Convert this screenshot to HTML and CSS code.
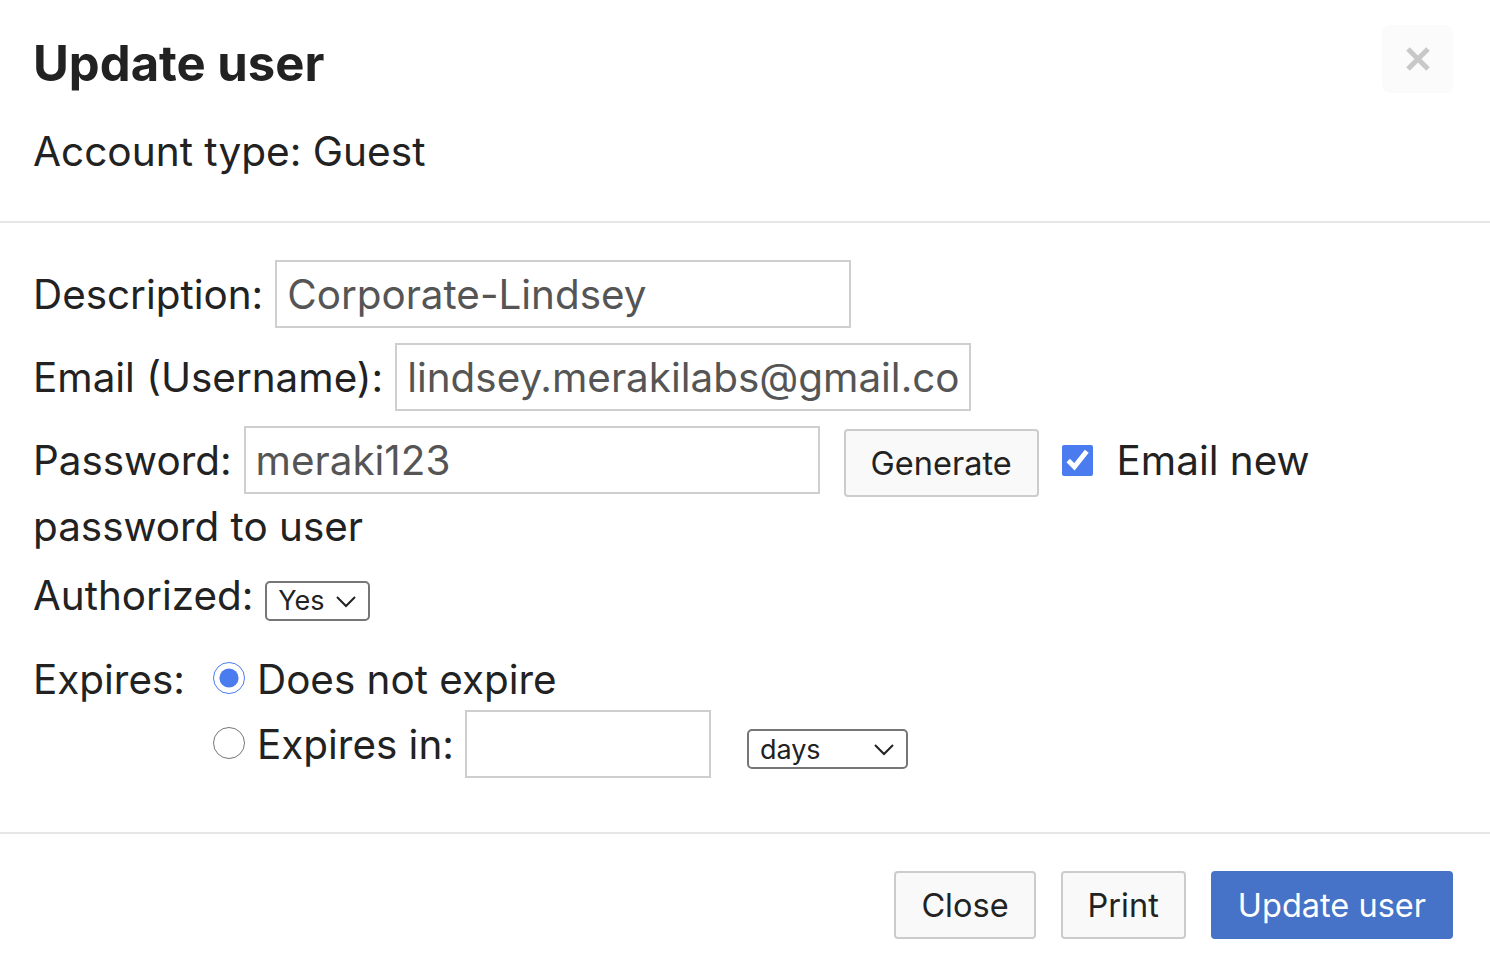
FILE: index.html
```html
<!DOCTYPE html>
<html lang="en">
<head>
    <meta charset="UTF-8">
    <title>Update user</title>
    <link rel="stylesheet" href="styles.css">
</head>
<body>
    <div class="modal">
        <div class="modal-header">
            <div class="header-top">
                <h1 class="title">Update user</h1>
                <button class="close-x" type="button">
                    <svg width="26" height="26" viewBox="0 0 26 26">
                        <path d="M3 3 L23 23 M23 3 L3 23" stroke="#c8c8c8" stroke-width="5" fill="none"/>
                    </svg>
                </button>
            </div>
            <p class="acct">Account type: Guest</p>
        </div>

        <div class="modal-body">
            <div class="row"><label class="lbl">Description:</label><input class="text-input" type="text" value="Corporate-Lindsey"></div>
            <div class="row"><label class="lbl">Email (Username):</label><input class="text-input" type="text" value="lindsey.merakilabs@gmail.com"></div>
            <div class="row pw-row"><label class="lbl">Password:</label><input class="text-input" type="text" value="meraki123"><button class="btn gen-btn" type="button">Generate</button><label class="check"><input type="checkbox" checked>Email new password to user</label></div>
            <div class="row auth-row"><label class="lbl">Authorized:</label><span class="select-wrap"><select class="sel sel-yes"><option>Yes</option><option>No</option></select><svg class="chev" width="20" height="12" viewBox="0 0 20 12"><path d="M1 1 L10 10 L19 1" stroke="#222" stroke-width="2" fill="none"/></svg></span></div>

            <div class="expires">
                <div class="exp-label">Expires:</div>
                <div class="exp-options">
                    <div class="opt"><input class="radio" type="radio" name="exp" checked>Does not expire</div>
                    <div class="opt"><input class="radio" type="radio" name="exp">Expires in:<input class="text-input days-input" type="text"><span class="select-wrap"><select class="sel sel-days"><option>days</option><option>weeks</option></select><svg class="chev" width="20" height="12" viewBox="0 0 20 12"><path d="M1 1 L10 10 L19 1" stroke="#222" stroke-width="2" fill="none"/></svg></span></div>
                </div>
            </div>
        </div>

        <div class="modal-footer">
            <button class="btn" type="button">Close</button>
            <button class="btn" type="button">Print</button>
            <button class="btn btn-primary" type="button">Update user</button>
        </div>
    </div>
</body>
</html>
```

FILE: styles.css
```css
body {
    margin: 0;
    font-family: Inter, "Noto Sans", sans-serif;
    color: #222;
    background: #fff;
}
.modal-header {
    padding: 25px 37px 0 33px;
    border-bottom: 2px solid #e6e6e6;
}
.header-top {
    display: flex;
    justify-content: space-between;
    align-items: flex-start;
}
.title {
    margin: 10px 0 0;
    font-size: 49px;
    font-weight: 700;
    line-height: 58px;
}
.close-x {
    width: 71px;
    height: 68px;
    border: 0;
    border-radius: 8px;
    background: #fbfbfb;
    display: flex;
    align-items: center;
    justify-content: center;
    padding: 0;
}
.acct {
    margin: 35px 0 0;
    padding-bottom: 45px;
    font-size: 40.6px;
    line-height: 48px;
}
.modal-body {
    padding: 37px 35px 54px 33px;
    border-bottom: 2px solid #e6e6e6;
    font-size: 40.4px;
    line-height: 60px;
}
.row {
    margin-bottom: 15px;
}
.pw-row {
    margin-bottom: 9px;
}
.auth-row {
    margin-bottom: 24px;
}
.lbl {
    margin-right: 12px;
}
.text-input {
    box-sizing: border-box;
    width: 576px;
    height: 68px;
    padding: 0 10px;
    border: 2px solid #cfcfcf;
    border-radius: 0;
    font-family: inherit;
    font-size: 40.4px;
    color: #555;
    outline: none;
}
.btn {
    box-sizing: border-box;
    height: 68px;
    padding: 0 25px;
    border: 2px solid #cccccc;
    border-radius: 4px;
    background: #f9f9f9;
    font-family: inherit;
    font-size: 32.5px;
    color: #222;
}
.gen-btn {
    width: 195px;
    margin-left: 24px;
}
.check input {
    width: 31px;
    height: 31px;
    margin: 0 24px 0 23px;
    vertical-align: -1px;
    accent-color: #4a7cf0;
}
.select-wrap {
    position: relative;
    display: inline-block;
    line-height: 0;
}
.sel {
    -webkit-appearance: none;
    appearance: none;
    box-sizing: border-box;
    height: 40px;
    padding: 0 0 0 11px;
    border: 2px solid #767676;
    border-radius: 5px;
    background: #fff;
    font-family: inherit;
    font-size: 27px;
    line-height: normal;
    color: #222;
}
.sel-yes {
    width: 105px;
}
.sel-days {
    width: 161px;
    margin-left: 36px;
}
.chev {
    position: absolute;
    right: 14px;
    top: 50%;
    margin-top: -5px;
    pointer-events: none;
}
.expires {
    display: flex;
}
.exp-label {
    width: 180px;
}
.opt {
    white-space: nowrap;
}
.radio {
    width: 32px;
    height: 32px;
    margin: 0 12px 2px 0;
    accent-color: #4a7cf0;
}
.days-input {
    width: 246px;
    margin-left: 11px;
}
.modal-footer {
    display: flex;
    justify-content: flex-end;
    gap: 25px;
    padding: 37px 37px 28px;
}
.btn-primary {
    background: #4672c8;
    border-color: #4672c8;
    color: #fff;
}
```
